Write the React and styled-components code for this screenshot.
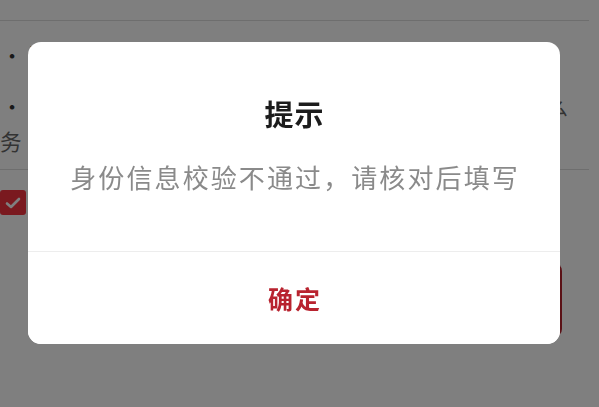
import React from "react";
import styled, { createGlobalStyle } from "styled-components";

const Global = createGlobalStyle`
  html, body { margin: 0; padding: 0; background: #fff; }
  body { font-family: "Noto Sans CJK SC", "Noto Sans", sans-serif; width: 599px; height: 407px; overflow: hidden; }
`;

const Page = styled.div`
  width: 599px;
  height: 407px;
  display: flex;
  flex-direction: column;
  overflow: hidden;
`;

const TopBar = styled.div`
  height: 20px;
  margin-right: 10px;
  border-bottom: 1px solid #dcdcdc;
  flex-shrink: 0;
`;

const Notes = styled.ul`
  list-style: none;
  margin: 0 10px 0 0;
  padding: 16px 0 0 0;
  height: 149px;
  box-sizing: border-box;
  border-bottom: 1px solid #dcdcdc;
  display: flex;
  flex-direction: column;
  gap: 16px;
  flex-shrink: 0;
`;

const Note = styled.li`
  display: flex;
  font-size: 21.6px;
  line-height: 35px;
  color: #666;
  white-space: nowrap;
  &::before {
    content: "•";
    width: 24px;
    text-align: center;
    color: #333;
    flex-shrink: 0;
  }
`;

const NoteText = styled.span`
  margin-left: ${(p) => (p.$hang ? "-24px" : "4px")};
  display: block;
`;

const AgreeRow = styled.div`
  display: flex;
  align-items: center;
  gap: 10px;
  padding-top: 20px;
  height: 25px;
  flex-shrink: 0;
`;

const Check = styled.span`
  width: 26px;
  height: 25px;
  border-radius: 3px;
  background: #f5323f;
  display: flex;
  align-items: center;
  justify-content: center;
`;

const AgreeText = styled.span`
  font-size: 20px;
  color: #666;
`;

const SubmitButton = styled.button`
  margin: 48px 37px 0 36px;
  height: 74px;
  flex-shrink: 0;
  border: none;
  border-radius: 8px;
  background: #b6222c;
  color: #fff;
  font-family: inherit;
  font-size: 26px;
`;

const Overlay = styled.div`
  position: fixed;
  inset: 0;
  background: rgba(0, 0, 0, 0.5);
  display: flex;
  align-items: flex-start;
  padding: 42px 39px 0 28px;
`;

const Dialog = styled.div`
  width: 532px;
  height: 302px;
  background: #fff;
  border-radius: 13px;
  display: flex;
  flex-direction: column;
  overflow: hidden;
`;

const Body = styled.div`
  height: 209px;
  box-sizing: border-box;
  padding-top: 51px;
  display: flex;
  flex-direction: column;
  align-items: center;
  gap: 24px;
`;

const Title = styled.div`
  font-size: 29px;
  line-height: 40px;
  font-weight: 700;
  color: #1c1c1c;
  letter-spacing: 1px;
  padding-left: 1px;
`;

const Message = styled.div`
  font-size: 26px;
  line-height: 40px;
  color: #8a8a8a;
  letter-spacing: 2.1px;
  padding-left: 2.1px;
  white-space: nowrap;
`;

const Footer = styled.button`
  flex: 1;
  border: none;
  border-top: 1px solid #ededed;
  background: #fff;
  font-family: inherit;
  font-size: 25px;
  font-weight: 700;
  color: #b8232f;
  letter-spacing: 1.8px;
  padding: 0 0 0 1.8px;
  display: flex;
  align-items: center;
  justify-content: center;
`;

export default function App() {
  return (
    <>
      <Global />
      <Page>
        <TopBar />
        <Notes>
          <Note>
            <NoteText>请如实填写本人身份信息，以便办理相关业务</NoteText>
          </Note>
          <Note>
            <span>
              <NoteText>身份信息仅用于实名认证，不会用于其他任何商业用途么</NoteText>
              <NoteText $hang>务</NoteText>
            </span>
          </Note>
        </Notes>
        <AgreeRow>
          <Check>
            <svg width="16" height="12" viewBox="0 0 16 12">
              <path d="M2 6.5 L6 10 L14 2" fill="none" stroke="#fff" strokeWidth="2.6" strokeLinecap="round" strokeLinejoin="round" />
            </svg>
          </Check>
          <AgreeText>我已阅读并同意《用户服务协议》</AgreeText>
        </AgreeRow>
        <SubmitButton>提交</SubmitButton>
      </Page>
      <Overlay>
        <Dialog>
          <Body>
            <Title>提示</Title>
            <Message>身份信息校验不通过，请核对后填写</Message>
          </Body>
          <Footer>确定</Footer>
        </Dialog>
      </Overlay>
    </>
  );
}
